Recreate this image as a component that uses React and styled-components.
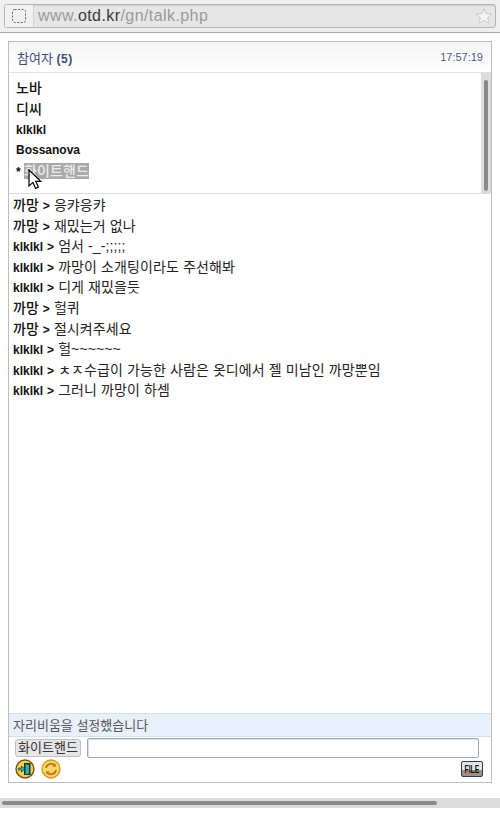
import React from "react";
import styled, { createGlobalStyle } from "styled-components";

const FONT = `"Liberation Sans", "Noto Sans CJK KR", sans-serif`;

const Global = createGlobalStyle`
  html, body {
    margin: 0;
    padding: 0;
    background: #fff;
    overflow: hidden;
  }
  body {
    font-family: ${FONT};
  }
`;

const Page = styled.div`
  width: 500px;
  height: 818px;
  display: flex;
  flex-direction: column;
`;

const Toolbar = styled.div`
  height: 33px;
  flex: none;
  padding: 4px 4px 0;
  box-sizing: border-box;
  background: #efefef;
  border-bottom: 1px solid #a8a8a8;
`;

const AddressBar = styled.div`
  height: 24px;
  box-sizing: border-box;
  display: flex;
  align-items: center;
  background: #e6e6e6;
  border: 1px solid #b4b4b4;
  border-radius: 3px;
  box-shadow: inset 0 1px 1px #d0d0d0;
`;

const PageIconBox = styled.div`
  width: 28px;
  height: 22px;
  flex: none;
  display: flex;
  align-items: center;
  justify-content: center;
  background: #f0f0f0;
  border-right: 1px solid #d4d4d4;
  border-radius: 2px 0 0 2px;
`;

const Url = styled.div`
  flex: 1;
  padding-left: 4px;
  font-size: 16px;
  color: #9a9a9a;
  letter-spacing: 0.42px;
`;

const Domain = styled.span`
  color: #3a3a3a;
`;

const StarBox = styled.div`
  width: 22px;
  flex: none;
  display: flex;
  justify-content: center;
`;

const Panel = styled.div`
  margin: 8px 8px 0;
  width: 484px;
  height: 742px;
  flex: none;
  box-sizing: border-box;
  border: 1px solid #bdbdbd;
  display: flex;
  flex-direction: column;
`;

const PanelHeader = styled.div`
  height: 31px;
  flex: none;
  box-sizing: border-box;
  padding: 0 8px;
  display: flex;
  align-items: center;
  justify-content: space-between;
  background: linear-gradient(#f5f5f5, #ffffff);
  border-bottom: 1px solid #dde3ea;
  color: #3b4a7a;
`;

const HeaderTitle = styled.div`
  font-size: 13px;
`;

const Count = styled.b`
  font-size: 12px;
  letter-spacing: 0.6px;
`;

const Clock = styled.div`
  font-size: 11px;
  color: #4b5a86;
`;

const MemberSection = styled.div`
  height: 121px;
  flex: none;
  box-sizing: border-box;
  display: flex;
  border-bottom: 1px solid #d5dde6;
`;

const MemberList = styled.div`
  flex: 1;
  padding: 5px 0 0 7px;
  position: relative;
`;

const Member = styled.div`
  height: 20.75px;
  line-height: 21px;
  font-size: ${(p) => (p.$latin ? "12px" : "14px")};
  font-weight: ${(p) => (p.$latin ? 700 : 500)};
  color: #111;
`;

const Star = styled.span`
  font-size: 12px;
  font-weight: 700;
`;

const Selected = styled.span`
  font-weight: 500;
  font-size: 14px;
  letter-spacing: 0.1px;
  background: #a9a9a9;
  color: #ececec;
`;

const Cursor = styled.svg`
  position: absolute;
  left: 19px;
  top: 96px;
`;

const VScrollTrack = styled.div`
  width: 10px;
  flex: none;
  background: #dcdcdc;
  padding: 7px 3px 0 3px;
  box-sizing: border-box;
`;

const VScrollThumb = styled.div`
  height: 111px;
  background: #8a8a8a;
  border-radius: 2px;
`;

const Messages = styled.div`
  flex: 1;
  padding: 1px 0 0 4px;
`;

const Line = styled.div`
  height: 20.6px;
  line-height: 21px;
  font-size: 14px;
  letter-spacing: 0.1px;
  color: #222;
  white-space: nowrap;
`;

const Nick = styled.span`
  font-size: ${(p) => (p.$latin ? "12px" : "14px")};
  font-weight: ${(p) => (p.$latin ? 700 : 500)};
  letter-spacing: 0;
  color: #111;
`;

const Arrow = styled.b`
  font-size: 12px;
  color: #111;
`;

const Status = styled.div`
  height: 24px;
  flex: none;
  box-sizing: border-box;
  padding-left: 4px;
  line-height: 23px;
  font-size: 13px;
  color: #555;
  background: #e8f0fb;
  border-top: 1px solid #d3e0ee;
  border-bottom: 1px solid #d3e0ee;
`;

const InputRow = styled.div`
  height: 20px;
  flex: none;
  padding: 1px 0 0 6px;
  display: flex;
  gap: 6px;
`;

const NameButton = styled.button`
  width: 66px;
  height: 18px;
  margin-top: 1px;
  padding: 0;
  box-sizing: border-box;
  font-family: ${FONT};
  font-size: 13px;
  line-height: 14px;
  color: #333;
  background: #e6e6e6;
  border: 1px solid #c0c0c0;
  border-radius: 3px;
`;

const ChatInput = styled.input`
  width: 392px;
  height: 20px;
  padding: 0;
  box-sizing: border-box;
  border: 1px solid #a8a8a8;
  border-radius: 2px;
  box-shadow: inset 1px 1px 1px #ddd;
  background: #fff;
`;

const ActionRow = styled.div`
  height: 24px;
  flex: none;
  box-sizing: border-box;
  padding: 1px 8px 0 6px;
  display: flex;
  align-items: flex-start;
  gap: 6px;
`;

const RoundIcon = styled.svg`
  display: block;
`;

const FileButton = styled.div`
  margin: 2px 0 0 auto;
  width: 22px;
  height: 16px;
  box-sizing: border-box;
  display: flex;
  justify-content: center;
  border: 1px solid #1f3a66;
  border-radius: 2px;
  background: linear-gradient(#e4e4e4 0 55%, #a08f80 55% 100%);
  font-family: "Liberation Sans", sans-serif;
  font-size: 11px;
  font-weight: bold;
  line-height: 14px;
  color: #111;
`;

const FileLabel = styled.span`
  flex: none;
  transform: scaleX(0.62);
`;

const Spacer = styled.div`
  height: 15px;
  flex: none;
`;

const HScrollTrack = styled.div`
  height: 10px;
  flex: none;
  background: #dcdcdc;
  padding: 3px 0 0 2px;
  box-sizing: border-box;
`;

const HScrollThumb = styled.div`
  width: 435px;
  height: 4px;
  background: #8a8a8a;
  border-radius: 2px;
`;

const members = [
  ["노바", false],
  ["디씨", false],
  ["klklkl", true],
  ["Bossanova", true],
];

const messages = [
  ["까망", "응캬응캬"],
  ["까망", "재밌는거 없나"],
  ["klklkl", "엄서 -_-;;;;;"],
  ["klklkl", "까망이 소개팅이라도 주선해봐"],
  ["klklkl", "디게 재밌을듯"],
  ["까망", "헐퀴"],
  ["까망", "절시켜주세요"],
  ["klklkl", "헐~~~~~~"],
  ["klklkl", "ㅊㅈ수급이 가능한 사람은 옷디에서 젤 미남인 까망뿐임"],
  ["klklkl", "그러니 까망이 하셈"],
];

const DashedPage = () => (
  <svg width="14" height="14" viewBox="0 0 14 14">
    <rect x="0.5" y="0.5" width="13" height="13" rx="2" fill="none" stroke="#666" strokeDasharray="2 1.5" />
  </svg>
);

const StarIcon = () => (
  <svg width="18" height="18" viewBox="0 0 18 18">
    <path d="M9 1.5l2.3 5 5.4.6-4 3.7 1.1 5.4L9 13.5l-4.8 2.7 1.1-5.4-4-3.7 5.4-.6z" fill="#f4f4f4" stroke="#c8c8c8" />
  </svg>
);

const ExitIcon = () => (
  <RoundIcon width="20" height="20" viewBox="0 0 20 20">
    <circle cx="10" cy="10" r="9" fill="#f5cf4a" stroke="#6e5510" strokeWidth="1.4" />
    <path d="M9 4h6.5v12H9z" fill="#14303c" />
    <path d="M10.5 5l3.5 1v8.5l-3.5 1z" fill="#2fb6a8" />
    <path d="M3.5 9h3V7l3.5 3-3.5 3v-2h-3z" fill="#17c0b0" stroke="#123" strokeWidth="0.6" />
  </RoundIcon>
);

const RefreshIcon = () => (
  <RoundIcon width="20" height="20" viewBox="0 0 20 20">
    <circle cx="10" cy="10" r="9" fill="#f7d768" stroke="#d49a20" strokeWidth="1.4" />
    <path d="M5 9a5 5 0 0 1 8.6-2.6M15 11a5 5 0 0 1-8.6 2.6" fill="none" stroke="#c9701a" strokeWidth="1.8" />
    <path d="M14.8 4.4v3.4h-3.4zM5.2 15.6v-3.4h3.4z" fill="#c9701a" />
  </RoundIcon>
);

const Pointer = () => (
  <Cursor width="14" height="22" viewBox="0 0 14 22">
    <path d="M1 1v16l4-3.6 2.6 6 2.8-1.2-2.6-5.8h5z" fill="#fff" stroke="#000" strokeWidth="1.2" />
  </Cursor>
);

export default function App() {
  return (
    <Page>
      <Global />
      <Toolbar>
        <AddressBar>
          <PageIconBox>
            <DashedPage />
          </PageIconBox>
          <Url>
            www.<Domain>otd.kr</Domain>/gn/talk.php
          </Url>
          <StarBox>
            <StarIcon />
          </StarBox>
        </AddressBar>
      </Toolbar>
      <Panel>
        <PanelHeader>
          <HeaderTitle>
            참여자 <Count>(5)</Count>
          </HeaderTitle>
          <Clock>17:57:19</Clock>
        </PanelHeader>
        <MemberSection>
          <MemberList>
            {members.map(([name, latin]) => (
              <Member key={name} $latin={latin}>
                {name}
              </Member>
            ))}
            <Member>
              <Star>* </Star>
              <Selected>화이트핸드</Selected>
            </Member>
            <Pointer />
          </MemberList>
          <VScrollTrack>
            <VScrollThumb />
          </VScrollTrack>
        </MemberSection>
        <Messages>
          {messages.map(([nick, text], i) => (
            <Line key={i}>
              <Nick $latin={nick === "klklkl"}>{nick}</Nick> <Arrow>&gt;</Arrow> {text}
            </Line>
          ))}
        </Messages>
        <Status>자리비움을 설정했습니다</Status>
        <InputRow>
          <NameButton>화이트핸드</NameButton>
          <ChatInput />
        </InputRow>
        <ActionRow>
          <ExitIcon />
          <RefreshIcon />
          <FileButton>
            <FileLabel>FILE</FileLabel>
          </FileButton>
        </ActionRow>
      </Panel>
      <Spacer />
      <HScrollTrack>
        <HScrollThumb />
      </HScrollTrack>
    </Page>
  );
}
